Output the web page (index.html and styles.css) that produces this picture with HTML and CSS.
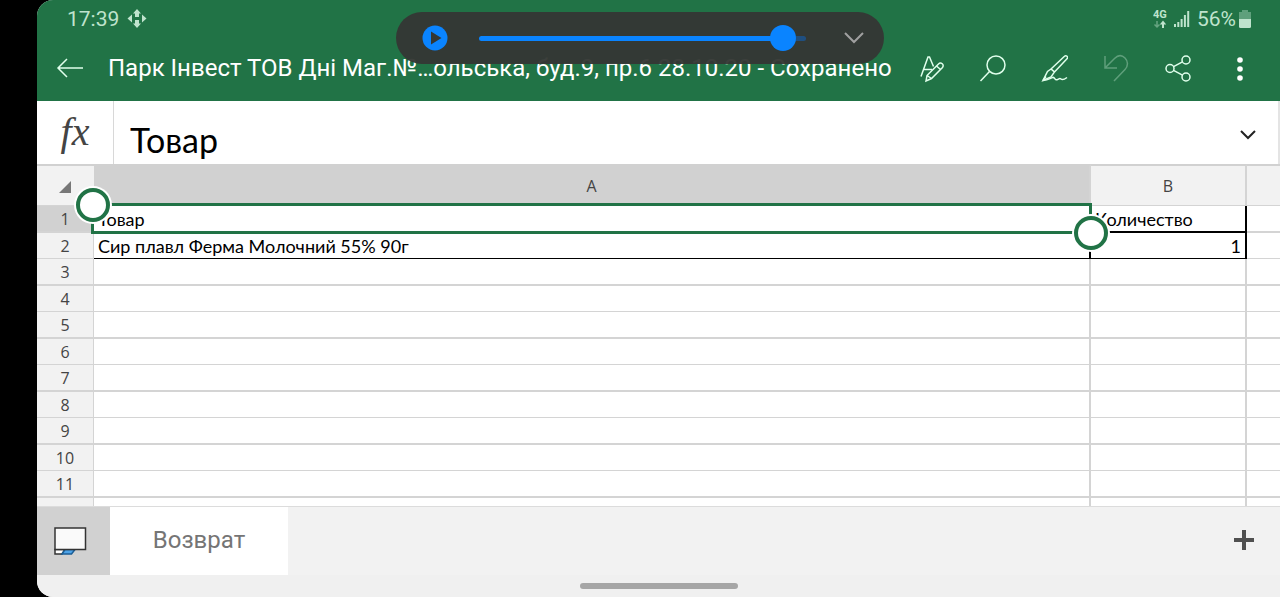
FILE: index.html
```html
<!DOCTYPE html>
<html lang="ru">
<head>
  <meta charset="UTF-8">
  <meta name="viewport" content="width=device-width, initial-scale=1.0">
  <title>Парк Інвест ТОВ</title>
  <link rel="stylesheet" href="styles.css">
</head>
<body>
  <div class="screen">
    <header class="header">
      <div class="status-bar">
        <span class="clock">17:39</span>
        <svg class="status-move" width="20" height="20" viewBox="0 0 20 20" fill="currentColor">
          <path d="M10 0l4 4.500h-2v3.500h-4V4.500H6zM10 19l-4-4.500h2V11h4v3.500h2zM0.500 9.500l4.500-4v8zM19.500 9.500l-4.500-4v8z"/>
        </svg>
        <div class="status-right">
          <svg width="14" height="20" viewBox="0 0 14 20">
            <text class="network-text" x="0" y="9">4G</text>
            <path d="M4 12v6M1.500 15.500L4 18l2.500-2.500" fill="none" stroke="currentColor" stroke-width="1.500" opacity=".45"/>
            <path d="M10 19v-5" fill="none" stroke="currentColor" stroke-width="2"/>
            <path d="M6.800 15.500L10 11.500l3.200 4z" fill="currentColor"/>
          </svg>
          <svg width="16" height="18" viewBox="0 0 16 18" fill="currentColor">
            <path d="M0 14h2v3H0zM3.300 12h2v5h-2zM6.600 9h2v8h-2zM9.900 5h2v12h-2zM13.200 1h2v16h-2z"/>
          </svg>
          <span class="battery-text">56%</span>
          <svg width="12" height="18" viewBox="0 0 12 18" fill="currentColor">
            <path d="M3 0h6v2h3v7H0V2h3z" opacity=".4"/>
            <path d="M0 9h12v7.500a1.500 1.500 0 0 1-1.500 1.500h-9A1.500 1.500 0 0 1 0 16.500z"/>
          </svg>
        </div>
      </div>
      <div class="title-bar">
        <button type="button" class="icon-btn back-btn" aria-label="Назад">
          <svg width="28" height="22" viewBox="0 0 28 22"><path d="M11 2L2 11l9 9M2 11h25"/></svg>
        </button>
        <h1>Парк Інвест ТОВ Дні Маг.№…ольська, буд.9, пр.6 28.10.20 - Сохранено</h1>
        <div class="toolbar">
          <button type="button" class="icon-btn" aria-label="Формат">
            <svg width="28" height="30" viewBox="0 0 28 30">
              <path d="M5 23.500L12 4h1.500l4 9.500M8 16.500h8"/>
              <path d="M11 22.500L22.500 11a2.600 2.600 0 0 1 4 3.500L15.500 25.500 10 28zM11 22.500l4.500 3M20.500 13l4 3.500"/>
            </svg>
          </button>
          <button type="button" class="icon-btn" aria-label="Поиск">
            <svg width="28" height="30" viewBox="0 0 28 30"><circle cx="18" cy="12" r="9"/><path d="M11.500 18.500L2.500 28"/></svg>
          </button>
          <button type="button" class="icon-btn" aria-label="Рисование">
            <svg width="28" height="30" viewBox="0 0 28 30">
              <path d="M11 16L24.500 3.300a1.700 1.700 0 0 1 2.500 2.500L14.500 19zM11 16L7.500 18.500 3 27.500l8-3.500 3.500-5z"/>
              <path d="M3 27.500l3-4M3 27.500c5 0 7-2 9.500-3s2 3 4.500 2.200 2.500-2.200 4-.7 3.500.3 6-1.500"/>
            </svg>
          </button>
          <button type="button" class="icon-btn" aria-label="Отменить" disabled>
            <svg width="28" height="30" viewBox="0 0 28 30"><path d="M3 3v12h12M3 15L12.500 5.500C16 2 20 2 23 5s3.500 8 0 11.500L12 28"/></svg>
          </button>
          <button type="button" class="icon-btn" aria-label="Поделиться">
            <svg width="28" height="30" viewBox="0 0 28 30">
              <circle cx="6" cy="15.500" r="4"/><circle cx="22" cy="7" r="4"/><circle cx="22" cy="24" r="4"/>
              <path d="M9.500 13.700l9-4.800M9.500 17.300l9 4.800"/>
            </svg>
          </button>
          <button type="button" class="icon-btn" aria-label="Ещё">
            <svg class="dots" width="28" height="30" viewBox="0 0 28 30"><circle cx="14" cy="7" r="2.800"/><circle cx="14" cy="16" r="2.800"/><circle cx="14" cy="25" r="2.800"/></svg>
          </button>
        </div>
      </div>
    </header>

    <div class="formula-bar">
      <label class="fx" for="formula">fx</label>
      <input type="text" id="formula" class="formula-input" value="Товар">
      <button type="button" class="icon-btn expand-btn" aria-label="Развернуть">
        <svg width="16" height="10" viewBox="0 0 16 10"><path d="M1 1l7 7 7-7"/></svg>
      </button>
    </div>

    <main class="sheet">
      <table>
        <colgroup>
          <col class="col-num">
          <col>
          <col class="col-b">
          <col class="col-c">
        </colgroup>
        <thead>
          <tr>
            <th class="corner"><svg width="12" height="12" viewBox="0 0 12 12"><path d="M12 0v12H0z" fill="#777"/></svg></th>
            <th class="active">A</th>
            <th>B</th>
            <th></th>
          </tr>
        </thead>
        <tbody>
          <tr>
            <th class="active">1</th>
            <td class="selected">Товар
              <div class="selection"><span class="handle handle-start"></span><span class="handle handle-end"></span></div>
            </td>
            <td class="edge-right edge-bottom">Количество</td>
            <td></td>
          </tr>
          <tr>
            <th>2</th>
            <td class="edge-right edge-bottom">Сир плавл Ферма Молочний 55% 90г</td>
            <td class="edge-right edge-bottom number">1</td>
            <td></td>
          </tr>
          <tr><th>3</th><td></td><td></td><td></td></tr>
          <tr><th>4</th><td></td><td></td><td></td></tr>
          <tr><th>5</th><td></td><td></td><td></td></tr>
          <tr><th>6</th><td></td><td></td><td></td></tr>
          <tr><th>7</th><td></td><td></td><td></td></tr>
          <tr><th>8</th><td></td><td></td><td></td></tr>
          <tr><th>9</th><td></td><td></td><td></td></tr>
          <tr><th>10</th><td></td><td></td><td></td></tr>
          <tr><th>11</th><td></td><td></td><td></td></tr>
          <tr><th></th><td></td><td></td><td></td></tr>
        </tbody>
      </table>
    </main>

    <footer class="footer">
      <div class="tabs">
        <button type="button" class="view-btn" aria-label="Вид">
          <svg width="34" height="30" viewBox="0 0 34 30">
            <path d="M2 23.500h10l-3 4.500H2z" fill="#fff" stroke="#333" stroke-width="1.500"/>
            <path d="M12 23.500h10L18.500 28H9z" fill="#4da3e8" stroke="#1b5e96" stroke-width="1.500"/>
            <path d="M2 2h30.500v21.500H2z" fill="#fafafa" stroke="#333" stroke-width="1.500"/>
          </svg>
        </button>
        <button type="button" class="tab">Возврат</button>
        <button type="button" class="add-btn" aria-label="Добавить лист">
          <svg width="22" height="22" viewBox="0 0 22 22"><path d="M11 1v20M1 11h20" stroke="#505050" stroke-width="4"/></svg>
        </button>
      </div>
      <div class="nav-bar"><span class="nav-pill"></span></div>
    </footer>

    <!-- Плавающая панель плеера -->
    <div class="player">
      <button type="button" class="icon-btn play-btn" aria-label="Воспроизвести">
        <svg width="26" height="26" viewBox="0 0 26 26"><circle cx="13" cy="13" r="12.500"/><path d="M9 6.500v13l10.500-6.500z"/></svg>
      </button>
      <input type="range" class="seek" min="0" max="100" value="97" aria-label="Позиция">
      <button type="button" class="icon-btn collapse-btn" aria-label="Свернуть">
        <svg width="20" height="12" viewBox="0 0 20 12"><path d="M1 1l9 9 9-9"/></svg>
      </button>
    </div>
  </div>
</body>
</html>
```
FILE: styles.css
```css
* {
  box-sizing: border-box;
}
body {
  margin: 0;
  background: #000;
  font-family: Roboto, sans-serif;
}
button {
  font-family: inherit;
  border: none;
  padding: 0;
  background: none;
  cursor: pointer;
}
svg {
  display: block;
}
.screen {
  position: relative;
  display: flex;
  flex-direction: column;
  height: 100vh;
  margin-left: 37px;
  background: #f2f2f2;
  border-radius: 16px 0 0 16px;
  overflow: hidden;
}

/* Header */
.header {
  background: #217346;
  color: #fff;
}
.status-bar {
  display: flex;
  align-items: center;
  height: 38px;
  padding: 0 29px 0 30px;
  color: #bfe3cd;
}
.clock,
.battery-text {
  font-size: 21px;
}
.status-move {
  margin-left: 8px;
}
.status-right {
  display: flex;
  align-items: center;
  gap: 7px;
  margin-left: auto;
}
.battery-text {
  margin-right: -4px;
}
.network-text {
  font-size: 11px;
  font-weight: 700;
  fill: currentColor;
}
.title-bar {
  display: flex;
  align-items: center;
  height: 63px;
  padding: 0 26px 4px 19px;
}
.title-bar h1 {
  flex: 1;
  margin: 0 0 0 24px;
  font-size: 24px;
  font-weight: 400;
  white-space: nowrap;
}
.icon-btn svg {
  fill: none;
  stroke: currentColor;
  stroke-width: 2;
}
.icon-btn {
  color: #e0ffec;
}
.icon-btn:disabled {
  color: #5f9f7b;
}
.toolbar {
  display: flex;
  gap: 34px;
}
.toolbar svg {
  stroke-width: 1.5;
}
.back-btn svg {
  stroke-width: 1.5;
}
.toolbar .dots {
  fill: #fff;
  stroke: none;
}

/* Formula bar */
.formula-bar {
  display: flex;
  height: 63px;
  background: #fff;
  border-right: 2px solid #e4e4e4;
}
.fx {
  width: 77px;
  border-right: 1px solid #d8d8d8;
  color: #444;
  font: italic 40px/62px "Liberation Serif", serif;
  text-align: center;
}
.formula-input {
  flex: 1;
  min-width: 0;
  padding: 14px 16px 0;
  border: none;
  outline: none;
  font-family: Lato, "Open Sans", sans-serif;
  font-size: 34px;
}
.expand-btn {
  width: 60px;
  padding: 4px 22px 0;
  color: #222;
}

/* Sheet */
.sheet {
  flex: 1;
  min-height: 0;
  overflow: hidden;
  background: #fff;
}
table {
  width: 100%;
  table-layout: fixed;
  border-collapse: separate;
  border-spacing: 0;
}
.col-num {
  width: 57px;
}
.col-b {
  width: 156px;
}
.col-c {
  width: 33px;
}
th,
td {
  height: 26px;
  padding: 2px 4px 0;
  border-right: 1px solid #d4d4d4;
  border-bottom: 1px solid #d4d4d4;
  line-height: 23px;
}
th {
  background: #f2f2f2;
  color: #444;
  font-family: "Open Sans", sans-serif;
  font-size: 16px;
  font-weight: 400;
}
td {
  position: relative;
  border-right-width: 2px;
  font-family: Lato, "Open Sans", sans-serif;
  font-size: 18px;
  white-space: nowrap;
}
tbody tr:nth-child(odd) th,
tbody tr:nth-child(odd) td {
  height: 27px;
  border-bottom-width: 2px;
}
thead th {
  height: 42px;
  border-top: 2px solid #d1d1d1;
  border-right-width: 2px;
}
tr > :last-child {
  border-right: none;
}
th.active {
  background: #d1d1d1;
}
.corner {
  padding-left: 22px;
  border-right: none;
}
td.edge-right {
  border-right-color: #000;
}
td.edge-bottom {
  border-bottom-color: #000;
}
td.number {
  text-align: right;
}
.selection {
  position: absolute;
  inset: -3px -3px -3px -3px;
  z-index: 1;
  border: 3px solid #217346;
}
.handle {
  position: absolute;
  width: 34px;
  height: 34px;
  border: 4px solid #217346;
  border-radius: 50%;
  background: #fff;
  box-shadow: 0 0 0 2px #fff;
}
.handle-start {
  top: -18px;
  left: -18px;
}
.handle-end {
  right: -19px;
  bottom: -19px;
}

/* Footer */
.tabs {
  display: flex;
  height: 69px;
  border-top: 1px solid #dcdcdc;
}
.view-btn {
  width: 73px;
  padding: 0 16px;
  background: #d1d1d1;
}
.tab {
  width: 178px;
  padding-bottom: 2px;
  background: #fff;
  color: #757575;
  font-size: 24px;
}
.add-btn {
  margin-left: auto;
  padding: 0 25px 2px;
}
.nav-bar {
  display: flex;
  justify-content: center;
  height: 22px;
  padding: 8px 0;
  background: #f0f0f0;
}
.nav-pill {
  width: 158px;
  border-radius: 3px;
  background: #a6a6a6;
}

/* Player */
.player {
  position: absolute;
  top: 12px;
  left: calc(50% - 263px);
  display: flex;
  align-items: center;
  width: 488px;
  height: 52px;
  padding: 0 20px 0 26px;
  border-radius: 26px;
  background: rgba(52, 55, 52, 0.96);
}
.play-btn svg {
  fill: #343734;
  stroke: none;
}
.play-btn circle {
  fill: #0a84ff;
}
.seek {
  appearance: none;
  width: 328px;
  height: 26px;
  margin: 0 38px 0 31px;
  background: none;
}
.seek::-webkit-slider-runnable-track {
  height: 5px;
  border-radius: 3px;
  background: linear-gradient(to right, #0a84ff 95%, #1f4f80 95%);
}
.seek::-webkit-slider-thumb {
  appearance: none;
  width: 26px;
  height: 26px;
  margin-top: -11px;
  border-radius: 50%;
  background: #0a84ff;
}
.collapse-btn {
  color: #a0a0a0;
}
```
